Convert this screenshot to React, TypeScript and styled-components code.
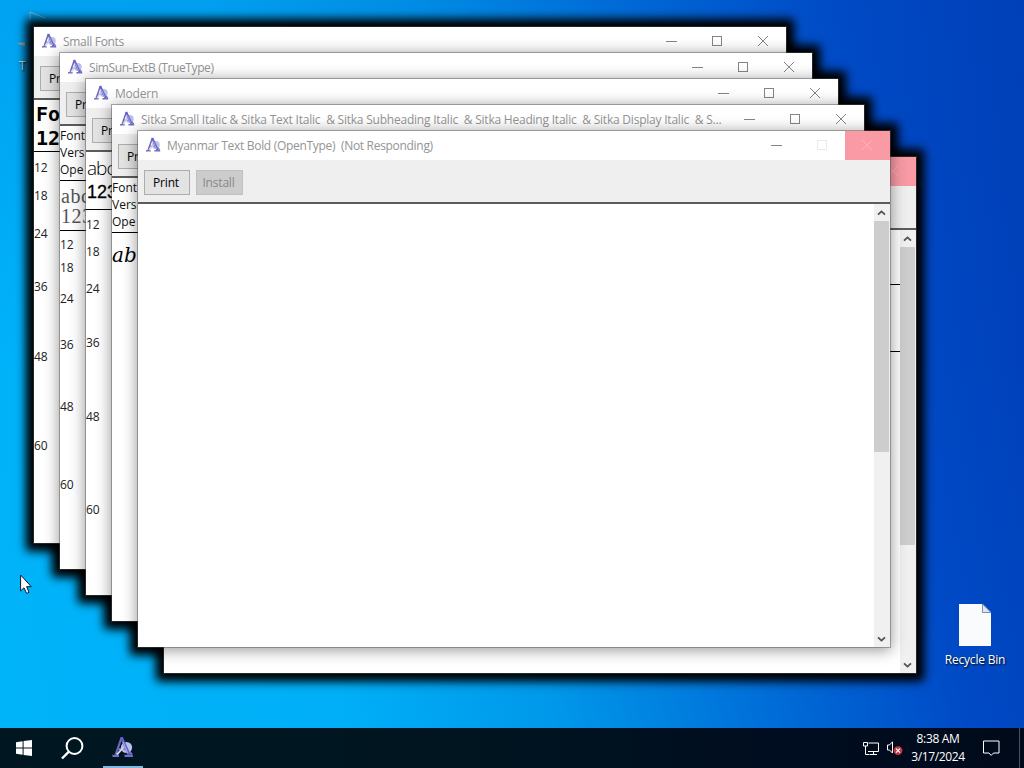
import React from 'react';
import styled, { createGlobalStyle, css } from 'styled-components';

interface FontWindowData {
  title: string;
  x: number;
  y: number;
  frozen?: boolean;
  tracking?: number;
  thumb?: number;
  content?: React.ReactNode;
}

const GlobalStyle = createGlobalStyle`
  body {
    margin: 0;
    overflow: hidden;
    font-family: 'Open Sans', 'Noto Sans', sans-serif;
    font-size: 12px;
  }

  * {
    box-sizing: border-box;
  }
`;

const Screen = styled.div`
  width: 1024px;
  height: 768px;
  display: flex;
  flex-direction: column;
  overflow: hidden;
  background: linear-gradient(180deg, rgba(0, 80, 200, 0.16), rgba(0, 80, 200, 0) 50%),
    linear-gradient(
      79deg,
      #00b4fa 0%,
      #00aff7 30%,
      #0098ea 48%,
      #006ad6 68%,
      #004ac6 83%,
      #003cb4 100%
    );
`;

const Desktop = styled.div`
  position: relative;
  flex: 1;
`;

const Glow = styled.div<{ x: number; y: number }>`
  position: absolute;
  left: ${(props) => props.x}px;
  top: ${(props) => props.y}px;
  width: 752px;
  height: 516px;
  box-shadow: 0 0 9px 8px #000;
`;

const Frame = styled.div<{ x: number; y: number }>`
  position: absolute;
  left: ${(props) => props.x}px;
  top: ${(props) => props.y}px;
  width: 752px;
  height: 516px;
  display: flex;
  flex-direction: column;
  background: #fff;
  box-shadow: 0 0 0 1px rgba(80, 80, 80, 0.45), 0 2px 14px 1px rgba(0, 0, 0, 0.42);
`;

const TitleBar = styled.div`
  height: 29px;
  flex-shrink: 0;
  display: flex;
  background: #fff;
`;

const TitleIcon = styled.div`
  width: 29px;
  padding: 6px 0 0 7px;
`;

const Title = styled.div<{ tracking: number }>`
  flex: 1;
  min-width: 0;
  white-space: pre;
  line-height: 29px;
  color: #949494;
  letter-spacing: ${(props) => props.tracking}px;
`;

const Caption = styled.div<{ close?: boolean }>`
  width: 46px;
  flex-shrink: 0;
  display: flex;
  align-items: center;
  justify-content: center;

  ${(props) =>
    props.close &&
    css`
      width: 45px;
      background: #f99aa5;
    `}
`;

const Toolbar = styled.div`
  height: 44px;
  flex-shrink: 0;
  display: flex;
  gap: 6px;
  padding: 10px 6px 0;
  background: #efefef;
  border-bottom: 2px solid #5c5c5c;
`;

const ToolButton = styled.button`
  width: 46px;
  height: 25px;
  padding: 0 2px 0 0;
  border: 1px solid #adadad;
  background: #e3e3e3;
  color: #000;
  font-family: inherit;
  font-size: 12px;
  letter-spacing: -0.2px;

  &:disabled {
    width: 47px;
    border-color: #c0c0c0;
    background: #cccccc;
    color: #888;
  }
`;

const Client = styled.div`
  flex: 1;
  min-height: 0;
  display: flex;
`;

const Page = styled.div`
  flex: 1;
  min-width: 0;
  overflow: hidden;
`;

const Info = styled.div`
  height: 55px;
  padding-top: 1px;
  border-bottom: 1px solid #000;
  line-height: 17px;
  color: #111;
`;

const Preview = styled.div<{ height: number }>`
  height: ${(props) => props.height}px;
  border-bottom: 1px solid #000;
  overflow: hidden;
`;

const PixelLine = styled.div`
  height: 24px;
  padding: 2px 0 0 2px;
  font: bold 20px/24px 'DejaVu Sans Mono', monospace;
`;

const SerifLine = styled.div`
  height: 20px;
  padding: 5px 0 0 1px;
  font: 20px/20px 'Liberation Serif', serif;
  letter-spacing: 0.6px;
  color: #555;
`;

const ThinLine = styled.div`
  padding: 4px 0 0 1px;
  font: 300 19px/24px 'Open Sans', sans-serif;
  letter-spacing: -1px;
`;

const HeavyLine = styled.div`
  padding-left: 1px;
  font: 500 18px/24px 'Liberation Sans', sans-serif;
  -webkit-text-stroke: 0.3px #000;
`;

const ItalicLine = styled.div`
  padding: 10px 0 0;
  font: italic 20px/24px 'DejaVu Serif', serif;
`;

const Samples = styled.div<{ top: number }>`
  padding-top: ${(props) => props.top}px;
`;

const SampleRow = styled.div<{ height: number }>`
  height: ${(props) => props.height}px;
  line-height: 16px;
  color: #222;
`;

const ScrollBar = styled.div`
  width: 16px;
  display: flex;
  flex-direction: column;
  padding-right: 1px;
  background: #f0f0f0;
`;

const ScrollArrow = styled.div`
  height: 17px;
  flex-shrink: 0;
  display: flex;
  align-items: center;
  justify-content: center;
`;

const Thumb = styled.div<{ height: number }>`
  height: ${(props) => props.height}px;
  background: #cdcdcd;
`;

const Spacer = styled.div`
  flex: 1;
`;

const LeftShortcut = styled.div`
  position: absolute;
  left: 16px;
  top: 10px;
  width: 40px;
  color: #d6e8f2;
  text-shadow: 1px 1px 2px #000;

  svg {
    display: block;
  }

  span {
    display: block;
    padding-left: 3px;
    line-height: 20px;
  }
`;

const RecycleBin = styled.div`
  position: absolute;
  left: 937px;
  top: 604px;
  width: 76px;
  display: flex;
  flex-direction: column;
  align-items: center;
  gap: 5px;
  color: #fff;
  line-height: 18px;
  letter-spacing: -0.2px;
  text-shadow: 1px 1px 2px #000;
`;

const Cursor = styled.div`
  position: absolute;
  left: 20px;
  top: 574px;
`;

const Taskbar = styled.div`
  height: 40px;
  display: flex;
  align-items: stretch;
  background: linear-gradient(90deg, #001721 0%, #001520 45%, #000d20 75%, #000a1b 100%);
  color: #fff;
`;

const TaskButton = styled.div<{ width: number; active?: boolean }>`
  width: ${(props) => props.width}px;
  display: flex;
  align-items: center;
  justify-content: center;

  ${(props) =>
    props.active &&
    css`
      margin-left: 7px;
      padding-right: 2px;
      border-bottom: 2px solid #80b8e4;
    `}
`;

const TrayIcon = styled.div<{ width: number }>`
  width: ${(props) => props.width}px;
  display: flex;
  align-items: center;
  justify-content: center;
`;

const Clock = styled.div`
  width: 62px;
  padding-top: 2px;
  text-align: center;
  line-height: 18px;
  letter-spacing: -0.35px;
  white-space: nowrap;
`;

const ShowDesktop = styled.div`
  width: 5px;
  margin-left: 6px;
  border-left: 1px solid #47545f;
`;

const FontIcon: React.FC<{ size: number }> = ({ size }) => (
  <svg width={size} height={size} viewBox="0 0 16 16">
    <circle cx="10.8" cy="8" r="3.9" fill="#b9c0ea" />
    <path d="M7.4 1 L3.2 13" stroke="#6a66bd" strokeWidth="1.5" fill="none" />
    <path d="M7.2 1 L12.6 13" stroke="#6460c4" strokeWidth="2.1" fill="none" />
    <path d="M8.4 4.4 L11.6 12" stroke="#a5a3e6" strokeWidth="1" />
    <path d="M1 13.8 H5.6 M9.4 13.8 H15.2" stroke="#7570c4" strokeWidth="1.6" />
    <path d="M5.2 9.2 H10" stroke="#8783d2" strokeWidth="1.4" />
    <path d="M4 13 L8.4 8.2" stroke="#d5d8e0" strokeWidth="1.3" />
    <path d="M13 11 L14.6 13" stroke="#7770cf" strokeWidth="1.4" />
  </svg>
);

const Chevron: React.FC<{ down?: boolean }> = ({ down }) => (
  <svg width="9" height="7" viewBox="0 0 9 7">
    <path
      d={down ? 'M1 2.3 L4.5 5.6 L8 2.3' : 'M1 5.7 L4.5 2.4 L8 5.7'}
      fill="none"
      stroke="#505050"
      strokeWidth="1.8"
    />
  </svg>
);

const sizes = ['12', '18', '24', '36', '48', '60'];

const SampleList: React.FC<{ heights: number[]; top?: number }> = ({ heights, top = 8 }) => (
  <Samples top={top}>
    {sizes.map((size, i) => (
      <SampleRow key={size} height={heights[i]}>
        {size}
      </SampleRow>
    ))}
  </Samples>
);

const FontInfo: React.FC = () => (
  <Info>
    <div>Font</div>
    <div>Vers</div>
    <div>Ope</div>
  </Info>
);

const FontWindow: React.FC<FontWindowData> = ({ title, x, y, frozen, tracking = 0, thumb, content }) => (
  <Frame x={x} y={y}>
    <TitleBar>
      <TitleIcon>
        <FontIcon size={16} />
      </TitleIcon>
      <Title tracking={tracking}>{title}</Title>
      <Caption>
        <svg width="12" height="11" viewBox="0 0 12 11">
          <path d="M1 5.5 H12" stroke="#858585" />
        </svg>
      </Caption>
      <Caption>
        <svg width="11" height="11" viewBox="0 0 11 11">
          <rect x="0.5" y="0.5" width="9" height="9" fill="none" stroke={frozen ? '#eaeaea' : '#858585'} />
        </svg>
      </Caption>
      <Caption close={frozen}>
        <svg width="11" height="11" viewBox="0 0 11 11">
          <path d="M0 0 L10 10 M10 0 L0 10" stroke={frozen ? '#fcb0b8' : '#858585'} />
        </svg>
      </Caption>
    </TitleBar>
    <Toolbar>
      <ToolButton>Print</ToolButton>
      {frozen && <ToolButton disabled>Install</ToolButton>}
    </Toolbar>
    <Client>
      <Page>{content}</Page>
      {thumb && (
        <ScrollBar>
          <ScrollArrow>
            <Chevron />
          </ScrollArrow>
          <Thumb height={thumb} />
          <Spacer />
          <ScrollArrow>
            <Chevron down />
          </ScrollArrow>
        </ScrollBar>
      )}
    </Client>
  </Frame>
);

// Back to front
const windows: FontWindowData[] = [
  {
    title: 'Small Fonts',
    x: 34,
    y: 27,
    tracking: -0.3,
    content: (
      <>
        <Preview height={52}>
          <PixelLine>Fo</PixelLine>
          <PixelLine>123</PixelLine>
        </Preview>
        <SampleList heights={[28, 38, 53, 70, 89, 16]} />
      </>
    ),
  },
  {
    title: 'SimSun-ExtB (TrueType)',
    x: 60,
    y: 53,
    tracking: -0.4,
    content: (
      <>
        <FontInfo />
        <Preview height={50}>
          <SerifLine>abc</SerifLine>
          <SerifLine>123</SerifLine>
        </Preview>
        <SampleList top={6} heights={[23, 31, 46, 62, 78, 16]} />
      </>
    ),
  },
  {
    title: 'Modern',
    x: 86,
    y: 79,
    tracking: -0.2,
    content: (
      <>
        <Preview height={58}>
          <ThinLine>abc</ThinLine>
          <HeavyLine>123</HeavyLine>
        </Preview>
        <SampleList top={7} heights={[27, 37, 54, 74, 93, 16]} />
      </>
    ),
  },
  {
    title:
      'Sitka Small Italic & Sitka Text Italic  & Sitka Subheading Italic  & Sitka Heading Italic  & Sitka Display Italic  & S...',
    x: 112,
    y: 105,
    tracking: -0.22,
    content: (
      <>
        <FontInfo />
        <ItalicLine>ab</ItalicLine>
      </>
    ),
  },
  {
    title: '',
    x: 164,
    y: 157,
    frozen: true,
    thumb: 298,
    content: (
      <>
        <Preview height={55} />
        <Preview height={67} />
      </>
    ),
  },
  {
    title: 'Myanmar Text Bold (OpenType)  (Not Responding)',
    x: 138,
    y: 131,
    tracking: -0.3,
    frozen: true,
    thumb: 231,
  },
];

const App: React.FC = () => (
  <>
    <GlobalStyle />
    <Screen>
      <Desktop>
        <LeftShortcut>
          <svg width="40" height="46" viewBox="0 0 40 46">
            <path d="M14 2 L29 8 M14 2 V10" stroke="#7db4d8" fill="none" />
            <path d="M1 33.5 L9 32 V36 Z" fill="#b0a090" />
          </svg>
          <span>T</span>
        </LeftShortcut>
        {windows.map((w) => (
          <Glow key={w.y} x={w.x} y={w.y} />
        ))}
        {windows.map((w) => (
          <FontWindow key={w.y} {...w} />
        ))}
        <RecycleBin>
          <svg width="32" height="42" viewBox="0 0 32 42">
            <path d="M0 0 H23 L32 9 V42 H0 Z" fill="#fafbfd" />
            <path d="M23.5 0 V8.5 H32 Z" fill="#dfe6ee" stroke="#7890ad" strokeWidth="1" />
          </svg>
          <span>Recycle Bin</span>
        </RecycleBin>
        <Cursor>
          <svg width="13" height="20" viewBox="0 0 13 20">
            <path
              d="M0.6 1 V17 L4 13.8 L6.6 19.4 L9 18.3 L6.6 12.7 H11.3 Z"
              fill="#fff"
              stroke="#101828"
              strokeWidth="1"
            />
          </svg>
        </Cursor>
      </Desktop>
      <Taskbar>
        <TaskButton width={48}>
          <svg width="16" height="16" viewBox="0 0 16 16">
            <path
              d="M0 2.3 L6.6 1.3 V7.5 H0 Z M7.6 1.1 L16 0 V7.5 H7.6 Z M0 8.5 H6.6 V14.7 L0 13.7 Z M7.6 8.5 H16 V16 L7.6 14.9 Z"
              fill="#fff"
            />
          </svg>
        </TaskButton>
        <TaskButton width={48}>
          <svg width="23" height="23" viewBox="0 0 23 23">
            <circle cx="13.5" cy="9" r="7.9" fill="none" stroke="#fff" strokeWidth="2" />
            <path d="M7.9 14.6 L1 21.5" stroke="#fff" strokeWidth="2.4" />
          </svg>
        </TaskButton>
        <TaskButton width={40} active>
          <FontIcon size={23} />
        </TaskButton>
        <Spacer />
        <TrayIcon width={24}>
          <svg width="17" height="15" viewBox="0 0 17 15">
            <path d="M5.5 2 H15.5 V10.5 H5 M10.5 10.5 V13.5 M6.5 13.5 H14" fill="none" stroke="#fff" />
            <path d="M0.5 1.5 H4.5 V5 H0.5 Z M2.5 5 V13.5 H6" fill="none" stroke="#fff" />
          </svg>
        </TrayIcon>
        <TrayIcon width={24}>
          <svg width="18" height="16" viewBox="0 0 18 16">
            <path d="M1.5 5 H3.5 L6.5 1.8 V13 L3.5 10 H1.5 Z" fill="none" stroke="#fff" />
            <circle cx="12" cy="10.6" r="4.4" fill="#c4363f" />
            <path d="M10 8.6 L14 12.6 M14 8.6 L10 12.6" stroke="#fff" strokeWidth="1.2" />
          </svg>
        </TrayIcon>
        <Clock>
          <div>8:38 AM</div>
          <div>3/17/2024</div>
        </Clock>
        <TrayIcon width={44}>
          <svg width="17" height="17" viewBox="0 0 17 17">
            <path d="M0.5 1 H16 V13 H10.5 L8.2 15.4 L6 13 H0.5 Z" fill="none" stroke="#fff" />
          </svg>
        </TrayIcon>
        <ShowDesktop />
      </Taskbar>
    </Screen>
  </>
);

export default App;
